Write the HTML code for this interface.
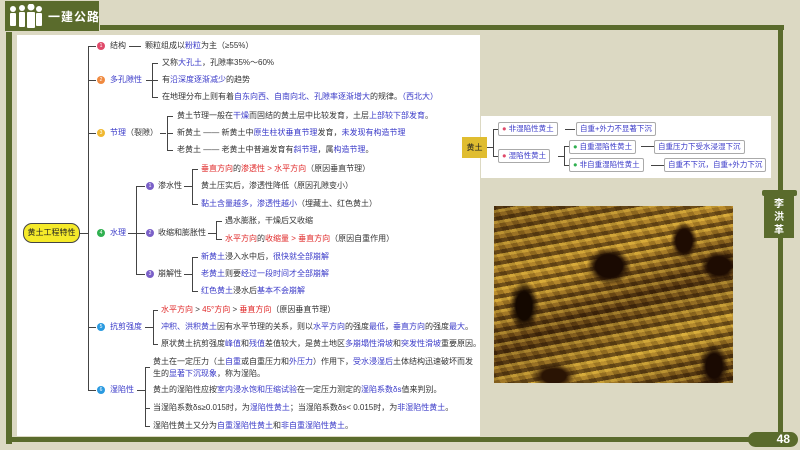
<!DOCTYPE html>
<html><head><meta charset="utf-8"><style>
*{margin:0;padding:0;box-sizing:border-box}
body{width:800px;height:450px;background:#dcd9c3;position:relative;overflow:hidden;font-family:"Liberation Sans","Noto Sans CJK SC",sans-serif;font-size:8px;color:#333}
.a{position:absolute;white-space:nowrap;line-height:10px}
.b{color:#3a3ac8}.r{color:#e02a2a}
.ln{position:absolute;background:#444}
.c{position:absolute;width:8px;height:8px;border-radius:50%;color:#fff;font-size:5px;line-height:8px;text-align:center}
.g{position:absolute;background:#5a6b2c}
.bx{position:absolute;border:1px solid #aaa;border-radius:2px;background:#fff;font-size:7.5px;line-height:12px;padding:0 3px;color:#3a3ac8;white-space:nowrap}
</style></head><body>
<div class="g" style="left:6px;top:25px;width:6px;height:419px"></div>
<div class="g" style="left:6px;top:25px;width:778px;height:5px"></div>
<div class="g" style="left:778px;top:25px;width:5px;height:418px"></div>
<div class="g" style="left:6px;top:437px;width:777px;height:5px"></div>
<div class="g" style="left:4px;top:0;width:96px;height:32px;border:1px solid #dcd9c3"></div>
<svg class="a" style="left:8px;top:4px" width="36" height="26" viewBox="0 0 36 26" fill="#fff">
<circle cx="5" cy="5" r="3"/><rect x="2" y="9" width="6" height="13" rx="1"/>
<circle cx="14" cy="4" r="3"/><rect x="11" y="8" width="6" height="15" rx="1"/>
<circle cx="23" cy="3" r="3.5"/><rect x="19" y="8" width="8" height="16" rx="1"/>
<circle cx="31" cy="5" r="3"/><rect x="28" y="9" width="6" height="13" rx="1"/></svg>
<div class="a" style="left:48px;top:10px;color:#fff;font-size:12px;line-height:14px;font-weight:bold;letter-spacing:1px">一建公路</div>
<div style="position:absolute;left:17px;top:35px;width:463px;height:401px;background:#fff"></div>
<div style="position:absolute;left:481px;top:116px;width:290px;height:62px;background:#fff"></div>
<div class="g" style="left:762px;top:190px;width:35px;height:6px;border-radius:2px"></div>
<div class="g" style="left:764px;top:196px;width:30px;height:42px;color:#fff;font-size:10px;line-height:13px;text-align:center;padding-top:2px;font-weight:bold">李<br>洪<br>革</div>
<div class="g" style="left:748px;top:432px;width:50px;height:15px;border-radius:8px;color:#fff;font-size:12px;font-weight:bold;text-align:right;padding-right:8px;line-height:15px">48</div>
<div style="position:absolute;left:494px;top:206px;width:239px;height:177px;background:
radial-gradient(ellipse 20px 35px at 30px 100px,#140800 40%,transparent 75%),
radial-gradient(ellipse 30px 25px at 115px 60px,#1a0a02 45%,transparent 75%),
radial-gradient(ellipse 18px 25px at 190px 35px,#1e0c02 45%,transparent 75%),
radial-gradient(ellipse 25px 20px at 225px 60px,#1e0c02 45%,transparent 75%),
radial-gradient(ellipse 30px 18px at 60px 170px,#2a1404 40%,transparent 75%),
radial-gradient(ellipse 20px 30px at 220px 160px,#1a0a02 40%,transparent 75%),
repeating-linear-gradient(170deg,rgba(40,20,4,.55) 0 4px,rgba(240,200,70,.35) 4px 7px,rgba(120,80,20,.2) 7px 11px),
repeating-linear-gradient(60deg,rgba(0,0,0,.15) 0 6px,rgba(255,220,100,.12) 6px 12px),
linear-gradient(160deg,#7a5418,#c8962e 35%,#5a3810 55%,#c89a30 75%,#4a2a0a)"></div>
<div class="ln" style="left:88px;top:46px;width:1px;height:344px"></div>
<div class="a" style="left:23px;top:223px;width:57px;height:20px;background:#f5ea2a;border:1px solid #444;border-radius:9px;text-align:center;line-height:18px;color:#222">黄土工程特性</div>
<div class="ln" style="left:80px;top:233px;width:8px;height:1px"></div>
<div class="ln" style="left:88px;top:46px;width:8px;height:1px"></div>
<div class="ln" style="left:88px;top:80px;width:8px;height:1px"></div>
<div class="ln" style="left:88px;top:133px;width:8px;height:1px"></div>
<div class="ln" style="left:88px;top:327px;width:8px;height:1px"></div>
<div class="ln" style="left:88px;top:390px;width:8px;height:1px"></div>
<div class="c" style="left:97px;top:42px;background:#e04a6a">1</div>
<div class="a" style="left:110px;top:41px">结构</div>
<div class="ln" style="left:129px;top:46px;width:12px;height:1px"></div>
<div class="a" style="left:145px;top:41px">颗粒组成以<span class="b">粉粒</span>为主（≥55%）</div>
<div class="c" style="left:97px;top:76px;background:#f08a40">2</div>
<div class="a b" style="left:110px;top:75px">多孔隙性</div>
<div class="ln" style="left:146px;top:80px;width:6px;height:1px"></div>
<div class="ln" style="left:152px;top:63px;width:1px;height:34px"></div>
<div class="ln" style="left:152px;top:63px;width:6px;height:1px"></div>
<div class="ln" style="left:152px;top:80px;width:6px;height:1px"></div>
<div class="ln" style="left:152px;top:97px;width:6px;height:1px"></div>
<div class="a" style="left:162px;top:58px">又称<span class="b">大孔土</span>，孔隙率35%～60%</div>
<div class="a" style="left:162px;top:75px">有<span class="b">沿深度逐渐减少</span>的趋势</div>
<div class="a" style="left:162px;top:92px">在地理分布上则有着<span class="b">自东向西、自南向北、孔隙率逐渐增大</span>的规律。<span class="b">（西北大）</span></div>
<div class="c" style="left:97px;top:129px;background:#f0b830">3</div>
<div class="a b" style="left:110px;top:128px">节理<span style="color:#333">（裂隙）</span></div>
<div class="ln" style="left:160px;top:133px;width:6px;height:1px"></div>
<div class="ln" style="left:167px;top:116px;width:1px;height:34px"></div>
<div class="ln" style="left:167px;top:116px;width:6px;height:1px"></div>
<div class="ln" style="left:167px;top:133px;width:6px;height:1px"></div>
<div class="ln" style="left:167px;top:150px;width:6px;height:1px"></div>
<div class="a" style="left:177px;top:111px">黄土节理一般在<span class="b">干燥</span>而固结的黄土层中比较发育，土层<span class="b">上部较下部发育</span>。</div>
<div class="a" style="left:177px;top:128px">新黄土 —— 新黄土中<span class="b">原生柱状垂直节理</span>发育，<span class="b">未发现有构造节理</span></div>
<div class="a" style="left:177px;top:145px">老黄土 —— 老黄土中普遍发育有<span class="b">斜节理</span>，属<span class="b">构造节理</span>。</div>
<div class="c" style="left:97px;top:229px;background:#30b050">4</div>
<div class="a b" style="left:110px;top:228px">水理</div>
<div class="ln" style="left:128px;top:233px;width:8px;height:1px"></div>
<div class="ln" style="left:136px;top:186px;width:1px;height:88px"></div>
<div class="ln" style="left:136px;top:186px;width:9px;height:1px"></div>
<div class="ln" style="left:136px;top:274px;width:9px;height:1px"></div>
<div class="ln" style="left:136px;top:233px;width:9px;height:1px"></div>
<div class="c" style="left:146px;top:182px;background:#7a60c8">1</div>
<div class="a" style="left:158px;top:181px">渗水性</div>
<div class="c" style="left:146px;top:229px;background:#7a60c8">2</div>
<div class="a" style="left:158px;top:228px">收缩和膨胀性</div>
<div class="c" style="left:146px;top:270px;background:#7a60c8">3</div>
<div class="a" style="left:158px;top:269px">崩解性</div>
<div class="ln" style="left:184px;top:186px;width:8px;height:1px"></div>
<div class="ln" style="left:192px;top:169px;width:1px;height:35px"></div>
<div class="ln" style="left:192px;top:169px;width:6px;height:1px"></div>
<div class="ln" style="left:192px;top:204px;width:6px;height:1px"></div>
<div class="a" style="left:201px;top:164px"><span class="r">垂直方向</span>的<span class="r">渗透性 &gt; 水平方向</span>（原因垂直节理）</div>
<div class="a" style="left:201px;top:181px">黄土压实后，渗透性降低（原因孔隙变小）</div>
<div class="a" style="left:201px;top:199px"><span class="b">黏土含量越多，渗透性越小</span>（埋藏土、红色黄土）</div>
<div class="ln" style="left:208px;top:233px;width:8px;height:1px"></div>
<div class="ln" style="left:216px;top:221px;width:1px;height:18px"></div>
<div class="ln" style="left:216px;top:221px;width:6px;height:1px"></div>
<div class="ln" style="left:216px;top:239px;width:6px;height:1px"></div>
<div class="a" style="left:225px;top:216px">遇水膨胀，干燥后又收缩</div>
<div class="a" style="left:225px;top:234px"><span class="r">水平方向</span>的<span class="r">收缩量 &gt; 垂直方向</span>（原因自重作用）</div>
<div class="ln" style="left:184px;top:274px;width:8px;height:1px"></div>
<div class="ln" style="left:192px;top:257px;width:1px;height:34px"></div>
<div class="ln" style="left:192px;top:257px;width:6px;height:1px"></div>
<div class="ln" style="left:192px;top:291px;width:6px;height:1px"></div>
<div class="a" style="left:201px;top:252px"><span class="b">新黄土</span>浸入水中后，<span class="b">很快就全部崩解</span></div>
<div class="a" style="left:201px;top:269px"><span class="b">老黄土</span>则要<span class="b">经过一段时间才全部崩解</span></div>
<div class="a" style="left:201px;top:286px"><span class="b">红色黄土</span>浸水后<span class="b">基本不会崩解</span></div>
<div class="c" style="left:97px;top:323px;background:#2a9ae0">5</div>
<div class="a b" style="left:110px;top:322px">抗剪强度</div>
<div class="ln" style="left:145px;top:327px;width:8px;height:1px"></div>
<div class="ln" style="left:153px;top:310px;width:1px;height:34px"></div>
<div class="ln" style="left:153px;top:310px;width:5px;height:1px"></div>
<div class="ln" style="left:153px;top:344px;width:5px;height:1px"></div>
<div class="a" style="left:161px;top:305px"><span class="r">水平方向 </span>&gt;<span class="r"> 45°方向 </span>&gt;<span class="r"> 垂直方向</span>（原因垂直节理）</div>
<div class="a" style="left:161px;top:322px"><span class="b">冲积、洪积黄土</span>因有水平节理的关系，则以<span class="b">水平方向</span>的强度<span class="b">最低</span>，<span class="b">垂直方向</span>的强度<span class="b">最大</span>。</div>
<div class="a" style="left:161px;top:339px">原状黄土抗剪强度<span class="b">峰值</span>和<span class="b">残值</span>差值较大，是黄土地区<span class="b">多崩塌性滑坡</span>和<span class="b">突发性滑坡</span>重要原因。</div>
<div class="c" style="left:97px;top:386px;background:#2a9ae0">6</div>
<div class="a b" style="left:110px;top:385px">湿陷性</div>
<div class="ln" style="left:137px;top:390px;width:8px;height:1px"></div>
<div class="ln" style="left:145px;top:367px;width:1px;height:59px"></div>
<div class="ln" style="left:145px;top:367px;width:5px;height:1px"></div>
<div class="ln" style="left:145px;top:408px;width:5px;height:1px"></div>
<div class="ln" style="left:145px;top:426px;width:5px;height:1px"></div>
<div class="a" style="left:153px;top:356px;line-height:12px">黄土在一定压力（土<span class="b">自重</span>或自重压力和<span class="b">外压力</span>）作用下，<span class="b">受水浸湿后</span>土体结构迅速破坏而发<br>生的<span class="b">显著下沉现象</span>，称为湿陷。</div>
<div class="a" style="left:153px;top:385px">黄土的湿陷性应按<span class="b">室内浸水饱和压缩试验</span>在一定压力测定的<span class="b">湿陷系数δs</span>值来判别。</div>
<div class="a" style="left:153px;top:403px">当湿陷系数δs≥0.015时，为<span class="b">湿陷性黄土</span>；当湿陷系数δs&lt; 0.015时，为<span class="b">非湿陷性黄土</span>。</div>
<div class="a" style="left:153px;top:421px">湿陷性黄土又分为<span class="b">自重湿陷性黄土</span>和<span class="b">非自重湿陷性黄土</span>。</div>
<div class="a" style="left:462px;top:137px;width:25px;height:21px;background:#e0bd30;line-height:21px;text-align:center;color:#222">黄土</div>
<div class="ln" style="left:487px;top:147px;width:6px;height:1px"></div>
<div class="ln" style="left:493px;top:129px;width:1px;height:27px"></div>
<div class="ln" style="left:493px;top:129px;width:5px;height:1px"></div>
<div class="ln" style="left:493px;top:156px;width:5px;height:1px"></div>
<div class="bx" style="left:498px;top:122px"><span style="color:#e04a6a">●</span> 非湿陷性黄土</div>
<div class="ln" style="left:565px;top:129px;width:10px;height:1px"></div>
<div class="bx" style="left:576px;top:122px">自重+外力不显著下沉</div>
<div class="bx" style="left:498px;top:149px"><span style="color:#e04a6a">●</span> 湿陷性黄土</div>
<div class="ln" style="left:558px;top:156px;width:6px;height:1px"></div>
<div class="ln" style="left:564px;top:146px;width:1px;height:19px"></div>
<div class="ln" style="left:564px;top:146px;width:5px;height:1px"></div>
<div class="ln" style="left:564px;top:165px;width:5px;height:1px"></div>
<div class="bx" style="left:569px;top:140px"><span style="color:#30b050">●</span> 自重湿陷性黄土</div>
<div class="ln" style="left:641px;top:146px;width:13px;height:1px"></div>
<div class="bx" style="left:654px;top:140px">自重压力下受水浸湿下沉</div>
<div class="bx" style="left:569px;top:158px"><span style="color:#30b050">●</span> 非自重湿陷性黄土</div>
<div class="ln" style="left:651px;top:165px;width:13px;height:1px"></div>
<div class="bx" style="left:664px;top:158px">自重不下沉，自重+外力下沉</div>
</body></html>
